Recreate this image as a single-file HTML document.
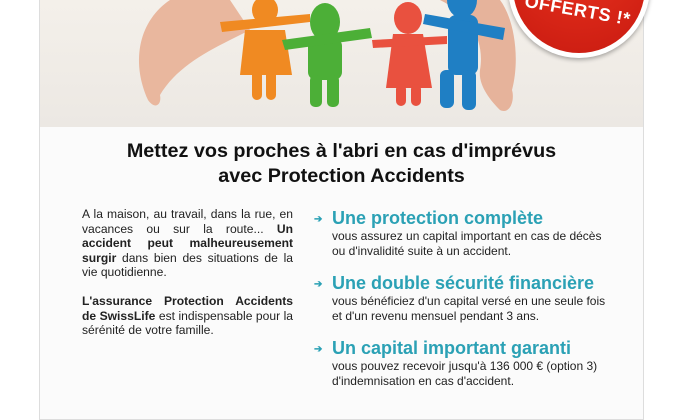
<!DOCTYPE html>
<html><head><meta charset="utf-8"><style>
*{margin:0;padding:0;box-sizing:border-box}
body{width:688px;height:400px;background:#fff;font-family:"Liberation Sans",sans-serif;position:relative;overflow:hidden}
.box{position:absolute;left:39px;top:0;width:605px;height:420px;border:1px solid #ddd;border-top:none;background:#fbfbfb}
.img{position:absolute;left:40px;top:0;width:603px;height:127px;background:linear-gradient(#f4f0ea,#ece8e3);overflow:hidden}
h1{position:absolute;left:40px;width:603px;top:139px;text-align:center;font-size:19.8px;line-height:25px;color:#111;font-weight:bold}
.l{position:absolute;left:82px;top:207px;width:211px;font-size:12.1px;line-height:14.5px;text-align:justify;color:#222}
.r{position:absolute;left:314px;top:207px;width:330px}
.r h2{font-size:18px;color:#2ba1b5;font-weight:bold;line-height:22px;padding-left:18px;position:relative}
.r h2:before{content:"➔";position:absolute;left:0;top:2px;font-size:10px;color:#2ba1b5}
.r p{font-size:12px;line-height:14.5px;color:#222;padding-left:18px;margin-bottom:14px}
</style></head><body>
<div class="box"></div>
<div class="img">
<svg width="603" height="127" viewBox="40 0 603 127">
<path d="M170 0 C140 20 130 60 148 100 C155 110 162 105 160 95 C175 70 200 55 230 40 L250 30 L230 0Z" fill="#e9b79e"/>
<path d="M440 0 C470 15 485 40 480 70 C478 85 490 100 500 110 C510 115 515 100 512 90 C520 60 515 20 500 0Z" fill="#e6b39b"/>
<g fill="#f08a22"><ellipse cx="265" cy="10" rx="13" ry="14"/><path d="M245 30 L285 30 L292 75 L240 75Z"/><rect x="252" y="70" width="10" height="30" rx="5"/><rect x="266" y="70" width="10" height="30" rx="5"/><path d="M220 22 L310 14 L310 22 L222 32Z"/></g>
<g fill="#4caf37"><ellipse cx="325" cy="22" rx="15" ry="19"/><rect x="308" y="38" width="34" height="42" rx="8"/><rect x="310" y="75" width="12" height="32" rx="5"/><rect x="327" y="75" width="12" height="32" rx="5"/><path d="M282 40 L370 28 L372 38 L285 50Z"/></g>
<g fill="#e9513f"><ellipse cx="408" cy="18" rx="14" ry="16"/><path d="M393 34 L423 34 L432 88 L386 88Z"/><rect x="396" y="84" width="10" height="22" rx="5"/><rect x="411" y="84" width="10" height="22" rx="5"/><path d="M372 40 L447 36 L447 44 L373 48Z"/></g>
<g fill="#1f7fc4"><ellipse cx="462" cy="0" rx="15" ry="18"/><rect x="448" y="15" width="30" height="60" rx="8"/><rect x="440" y="70" width="14" height="38" rx="6"/><rect x="462" y="70" width="14" height="40" rx="6"/><path d="M425 14 L505 28 L503 40 L423 24Z"/></g>
</svg>
</div>
<div style="position:absolute;left:508px;top:-84px;width:142px;height:142px;border-radius:50%;background:#fff;box-shadow:0 2px 4px rgba(0,0,0,.3)"></div>
<div style="position:absolute;left:513px;top:-79px;width:132px;height:132px;border-radius:50%;background:radial-gradient(circle at 50% 30%,#e8321e,#c81a10)"></div>
<div style="position:absolute;left:524px;top:0px;color:#fff;font-weight:bold;font-size:18px;transform:rotate(10deg);letter-spacing:0.5px">OFFERTS !*</div>
<h1>Mettez vos proches à l'abri en cas d'imprévus<br>avec Protection Accidents</h1>
<div class="l">A la maison, au travail, dans la rue, en vacances ou sur la route... <b>Un accident peut malheureusement surgir</b> dans bien des situations de la vie quotidienne.<br><br><b>L'assurance Protection Accidents de SwissLife</b> est indispensable pour la sérénité de votre famille.</div>
<div class="r">
<h2>Une protection complète</h2><p>vous assurez un capital important en cas de décès<br>ou d'invalidité suite à un accident.</p>
<h2>Une double sécurité financière</h2><p>vous bénéficiez d'un capital versé en une seule fois<br>et d'un revenu mensuel pendant 3 ans.</p>
<h2>Un capital important garanti</h2><p>vous pouvez recevoir jusqu'à 136 000 € (option 3)<br>d'indemnisation en cas d'accident.</p>
</div>
</body></html>
